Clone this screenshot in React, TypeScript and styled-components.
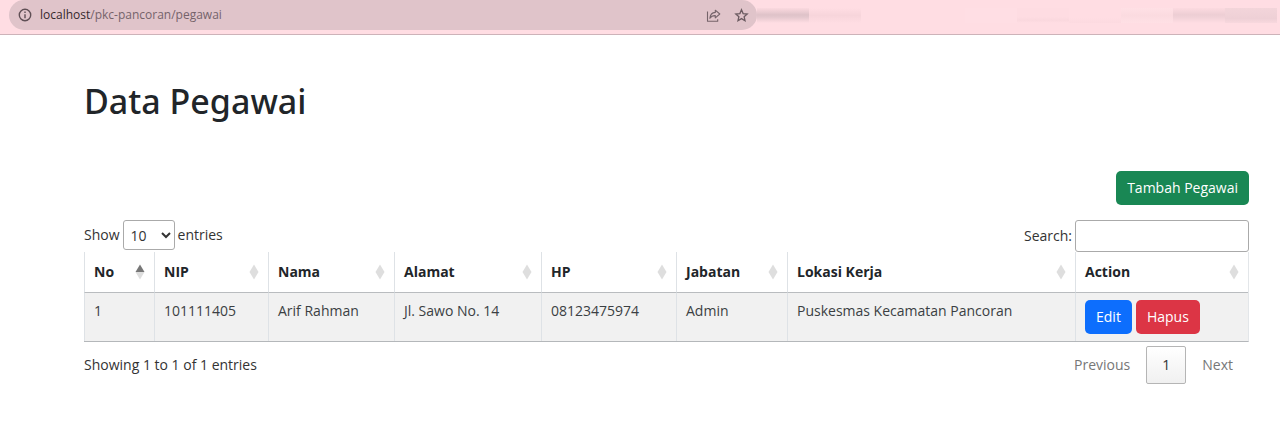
import React from "react";
import styled, { createGlobalStyle } from "styled-components";

const GlobalStyle = createGlobalStyle`
  *, *::before, *::after { box-sizing: border-box; }
  body {
    margin: 0;
    background: #fff;
    color: #212529;
    font-family: "Open Sans", "Noto Sans", sans-serif;
    font-size: 14px;
    line-height: 22px;
  }
  button, input, select { font: inherit; color: inherit; }
`;

const BrowserBar = styled.header`
  display: flex;
  align-items: flex-start;
  height: 35px;
  padding: 0 3px 0 9px;
  background: #ffdde3;
  border-bottom: 1px solid #cdb3b9;
`;

const AddressField = styled.div`
  display: flex;
  flex: 1;
  align-items: center;
  height: 30px;
  padding: 0 8px 0 9px;
  border-radius: 15px;
  background: #e0c4ca;
  color: #75636a;
  font-size: 12px;
  line-height: 16px;
`;

const Address = styled.div`
  flex: 1;
  padding-left: 8px;
`;

const Host = styled.span`
  color: #35292d;
`;

const IconButton = styled.button`
  display: flex;
  padding: 0;
  border: 0;
  background: none;
  color: #75636a;

  & + & { margin-left: 13px; }
`;

const Smudges = styled.div`
  display: flex;
  padding-top: 8px;
`;

const Smudge = styled.span<{ $fill: string }>`
  width: 52px;
  height: 15px;
  background: ${(p) => p.$fill};
`;

const Page = styled.main`
  padding: 44px 31px 44px 84px;
`;

const Title = styled.h1`
  margin: 0 0 48px;
  font-family: "Noto Sans", "Open Sans", sans-serif;
  font-size: 34px;
  font-weight: 500;
  line-height: 44px;
`;

const Toolbar = styled.div`
  display: flex;
  justify-content: flex-end;
  margin-bottom: 15px;
`;

const Button = styled.button<{ $color: string }>`
  height: 34px;
  padding: 0 11px;
  border: 0;
  border-radius: 5px;
  background: ${(p) => p.$color};
  color: #fff;
`;

const Controls = styled.div`
  display: flex;
  align-items: flex-start;
  justify-content: space-between;
  height: 32px;
`;

const ControlLabel = styled.label`
  display: flex;
  align-items: center;
  gap: 3px;
  color: #333;
`;

const LengthSelect = styled.select`
  width: 52px;
  height: 30px;
  padding: 0 0 0 3px;
  border: 1px solid #aaa;
  border-radius: 3px;
  background: #fff;
`;

const SearchInput = styled.input`
  width: 174px;
  height: 32px;
  padding: 5px;
  border: 1px solid #aaa;
  border-radius: 3px;
  background: #fff;
`;

const DataTable = styled.table`
  width: 100%;
  table-layout: fixed;
  border-collapse: separate;
  border-spacing: 0;
  border-right: 1px solid #e3e6e9;
  border-bottom: 1px solid #b4b7ba;
`;

const HeadCell = styled.th`
  height: 41px;
  padding: 0 9px;
  border-left: 1px solid #dee2e6;
  border-bottom: 1px solid #b9bcbf;
  text-align: left;
  font-weight: 700;
`;

const HeadContent = styled.div`
  display: flex;
  align-items: center;
  justify-content: space-between;
`;

const Cell = styled.td`
  height: 48px;
  padding: 7px 9px;
  border-left: 1px solid #dee2e6;
  background: #f1f1f1;
  color: #3b3f43;
  vertical-align: top;
`;

const Actions = styled.div`
  display: flex;
  gap: 4px;
`;

const Footer = styled.div`
  display: flex;
  align-items: center;
  justify-content: space-between;
  padding-top: 4px;
  color: #333;
`;

const Pager = styled.nav`
  display: flex;
`;

const PageButton = styled.button<{ $current?: boolean }>`
  height: 38px;
  min-width: 39px;
  padding: 0 15px;
  border: 1px solid ${(p) => (p.$current ? "#b5b5b5" : "transparent")};
  border-radius: 2px;
  background: ${(p) => (p.$current ? "linear-gradient(#fff, #f0f0f0)" : "none")};
  color: ${(p) => (p.$current ? "#333" : "#777")};
`;

const smudges = [
  "linear-gradient(#fbd9df, #dfc3c9 45%, #e3c7cd 60%, #ffdde3)",
  "linear-gradient(#ffdde3, #f7d5db 50%, #ffdde3)",
  "#ffdde3",
  "#ffdde3",
  "#ffdee4",
  "linear-gradient(#fedce2 60%, #fad8de 80%, #ffdde3)",
  "linear-gradient(#ffdde3 60%, #fcdae0)",
  "linear-gradient(#ffe0e5, #fbdbe0 50%, #ffe0e5)",
  "linear-gradient(#fcdae0, #edced4 45%, #f0d1d7 60%, #ffdde3)",
  "linear-gradient(#f3d5da, #eed0d6 70%, #f8d8de)",
];

const columns = [
  { label: "No", width: 70 },
  { label: "NIP", width: 114 },
  { label: "Nama", width: 126 },
  { label: "Alamat", width: 147 },
  { label: "HP", width: 135 },
  { label: "Jabatan", width: 111 },
  { label: "Lokasi Kerja" },
  { label: "Action", width: 173 },
];

const employee = [
  "1",
  "101111405",
  "Arif Rahman",
  "Jl. Sawo No. 14",
  "08123475974",
  "Admin",
  "Puskesmas Kecamatan Pancoran",
];

function SortIcon({ ascending }: { ascending: boolean }) {
  return (
    <svg width="10" height="16" viewBox="0 0 10 16" aria-hidden="true">
      <path d="M5 0.5 9.5 8h-9z" fill={ascending ? "#777" : "#dedede"} />
      <path d="M5 15.5 9.5 8h-9z" fill="#dedede" />
    </svg>
  );
}

function InfoIcon() {
  return (
    <svg width="14" height="14" viewBox="0 0 14 14" fill="none" stroke="#5f4f55" strokeWidth="1.4" aria-hidden="true">
      <circle cx="7" cy="7" r="5.7" />
      <path d="M7 6.2v4M7 3.6v1.4" />
    </svg>
  );
}

function ShareIcon() {
  return (
    <svg width="15" height="15" viewBox="0 0 15 15" fill="none" stroke="currentColor" strokeWidth="1.1" strokeLinejoin="round" aria-hidden="true">
      <path d="M1.500 3.500v9.800h10.200v-2" />
      <path d="M9.300 2.200 13.800 6 9.300 9.800V7.600C7 7.500 5.200 8.300 3.900 10.300 4.200 6.800 6 4.700 9.300 4.400z" />
    </svg>
  );
}

function StarIcon() {
  return (
    <svg width="15" height="15" viewBox="0 0 15 15" fill="none" stroke="#6b5b61" strokeWidth="1.3" aria-hidden="true">
      <path d="m7.500 1.800 1.600 3.800 4.100.4-3.100 2.700.9 4-3.500-2.100L4 12.700l.9-4L1.800 6l4.100-.4z" />
    </svg>
  );
}

export default function App() {
  return (
    <>
      <GlobalStyle />
      <BrowserBar>
        <AddressField>
          <InfoIcon />
          <Address>
            <Host>localhost</Host>/pkc-pancoran/pegawai
          </Address>
          <IconButton type="button" aria-label="Share">
            <ShareIcon />
          </IconButton>
          <IconButton type="button" aria-label="Bookmark">
            <StarIcon />
          </IconButton>
        </AddressField>
        <Smudges aria-hidden="true">
          {smudges.map((fill, i) => (
            <Smudge key={i} $fill={fill} />
          ))}
        </Smudges>
      </BrowserBar>
      <Page>
        <Title>Data Pegawai</Title>
        <Toolbar>
          <Button type="button" $color="#198754">Tambah Pegawai</Button>
        </Toolbar>
        <Controls>
          <ControlLabel>
            Show
            <LengthSelect defaultValue="10">
              <option>10</option>
              <option>25</option>
              <option>50</option>
              <option>100</option>
            </LengthSelect>
            entries
          </ControlLabel>
          <ControlLabel>
            Search:
            <SearchInput type="search" />
          </ControlLabel>
        </Controls>
        <DataTable>
          <colgroup>
            {columns.map((c) => (
              <col key={c.label} width={c.width} />
            ))}
          </colgroup>
          <thead>
            <tr>
              {columns.map((c, i) => (
                <HeadCell key={c.label} scope="col" aria-sort={i === 0 ? "ascending" : undefined}>
                  <HeadContent>
                    {c.label}
                    <SortIcon ascending={i === 0} />
                  </HeadContent>
                </HeadCell>
              ))}
            </tr>
          </thead>
          <tbody>
            <tr>
              {employee.map((value) => (
                <Cell key={value}>{value}</Cell>
              ))}
              <Cell>
                <Actions>
                  <Button type="button" $color="#0d6efd">Edit</Button>
                  <Button type="button" $color="#dc3545">Hapus</Button>
                </Actions>
              </Cell>
            </tr>
          </tbody>
        </DataTable>
        <Footer>
          <span>Showing 1 to 1 of 1 entries</span>
          <Pager aria-label="Pagination">
            <PageButton type="button">Previous</PageButton>
            <PageButton type="button" $current aria-current="page">1</PageButton>
            <PageButton type="button">Next</PageButton>
          </Pager>
        </Footer>
      </Page>
    </>
  );
}
